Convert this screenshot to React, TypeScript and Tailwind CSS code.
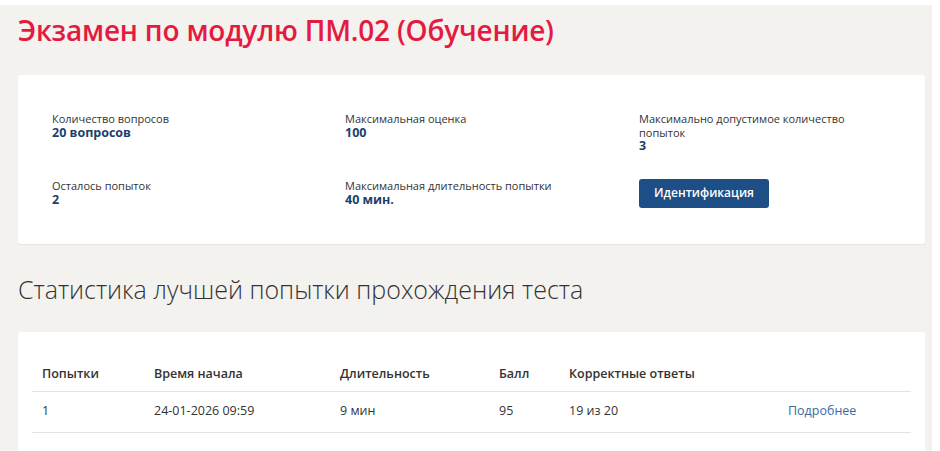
import React from 'react';

const font = { fontFamily: '"Open Sans", "Noto Sans", sans-serif' };

const Info = ({ label, value }: { label: string; value: string }) => (
  <div className="flex flex-col">
    <span className="text-[11px] leading-[13.5px] text-[#333] pr-[60px]">{label}</span>
    <span className="text-[12.5px] leading-[14px] font-bold text-[#1c3f6d]">{value}</span>
  </div>
);

const rows = [
  { n: '1', start: '24-01-2026 09:59', dur: '9 мин', score: '95', correct: '19 из 20' },
];

export default function App() {
  return (
    <div className="w-[940px] h-[451px] bg-white overflow-hidden" style={font}>
      <div className="mt-[5px] w-[932px] h-[446px] bg-[#f3f2ef] pl-[18px] pr-[7px]">
        <h1 className="pt-[7px] text-[28px] leading-[36px] font-semibold text-[#e31b40] tracking-[-0.2px]">
          Экзамен по модулю ПМ.02 (Обучение)
        </h1>

        <div className="mt-[27px] h-[169px] bg-white rounded-[3px] shadow-[0_1px_2px_rgba(0,0,0,0.06)] pl-[34px] pt-[37px]">
          <div className="grid grid-cols-[293px_294px_1fr] gap-y-[26px] items-start">
            <Info label="Количество вопросов" value="20 вопросов" />
            <Info label="Максимальная оценка" value="100" />
            <Info label="Максимально допустимое количество попыток" value="3" />
            <Info label="Осталось попыток" value="2" />
            <Info label="Максимальная длительность попытки" value="40 мин." />
            <div>
              <button className="-mt-[1px] w-[130px] h-[29px] bg-[#1d4e85] rounded-[3px] text-white text-[12px] font-semibold">
                Идентификация
              </button>
            </div>
          </div>
        </div>

        <h2 className="mt-[28px] text-[25px] leading-[34px] font-light text-[#333]">
          Статистика лучшей попытки прохождения теста
        </h2>

        <div className="mt-[26px] h-[120px] bg-white rounded-[3px] px-[14px] pt-[27px]">
          <table className="w-full text-[12.5px] text-[#333] border-collapse">
            <thead>
              <tr className="h-[32px] border-b border-[#e2e2e2] text-left align-middle">
                <th className="w-[112px] pl-[10px] font-semibold">Попытки</th>
                <th className="w-[186px] pl-[10px] font-semibold">Время начала</th>
                <th className="w-[159px] pl-[10px] font-semibold">Длительность</th>
                <th className="w-[70px] pl-[10px] font-semibold">Балл</th>
                <th className="w-[219px] pl-[10px] font-semibold">Корректные ответы</th>
                <th></th>
              </tr>
            </thead>
            <tbody>
              {rows.map((r) => (
                <tr key={r.n} className="h-[41px] border-b border-[#e2e2e2]">
                  <td className="pl-[10px]">{r.n}</td>
                  <td className="pl-[10px]">{r.start}</td>
                  <td className="pl-[10px]">{r.dur}</td>
                  <td className="pl-[10px]">{r.score}</td>
                  <td className="pl-[10px]">{r.correct}</td>
                  <td className="pl-[10px]">
                    <a className="text-[#3b6a9c] cursor-pointer">Подробнее</a>
                  </td>
                </tr>
              ))}
            </tbody>
          </table>
        </div>
      </div>
    </div>
  );
}
